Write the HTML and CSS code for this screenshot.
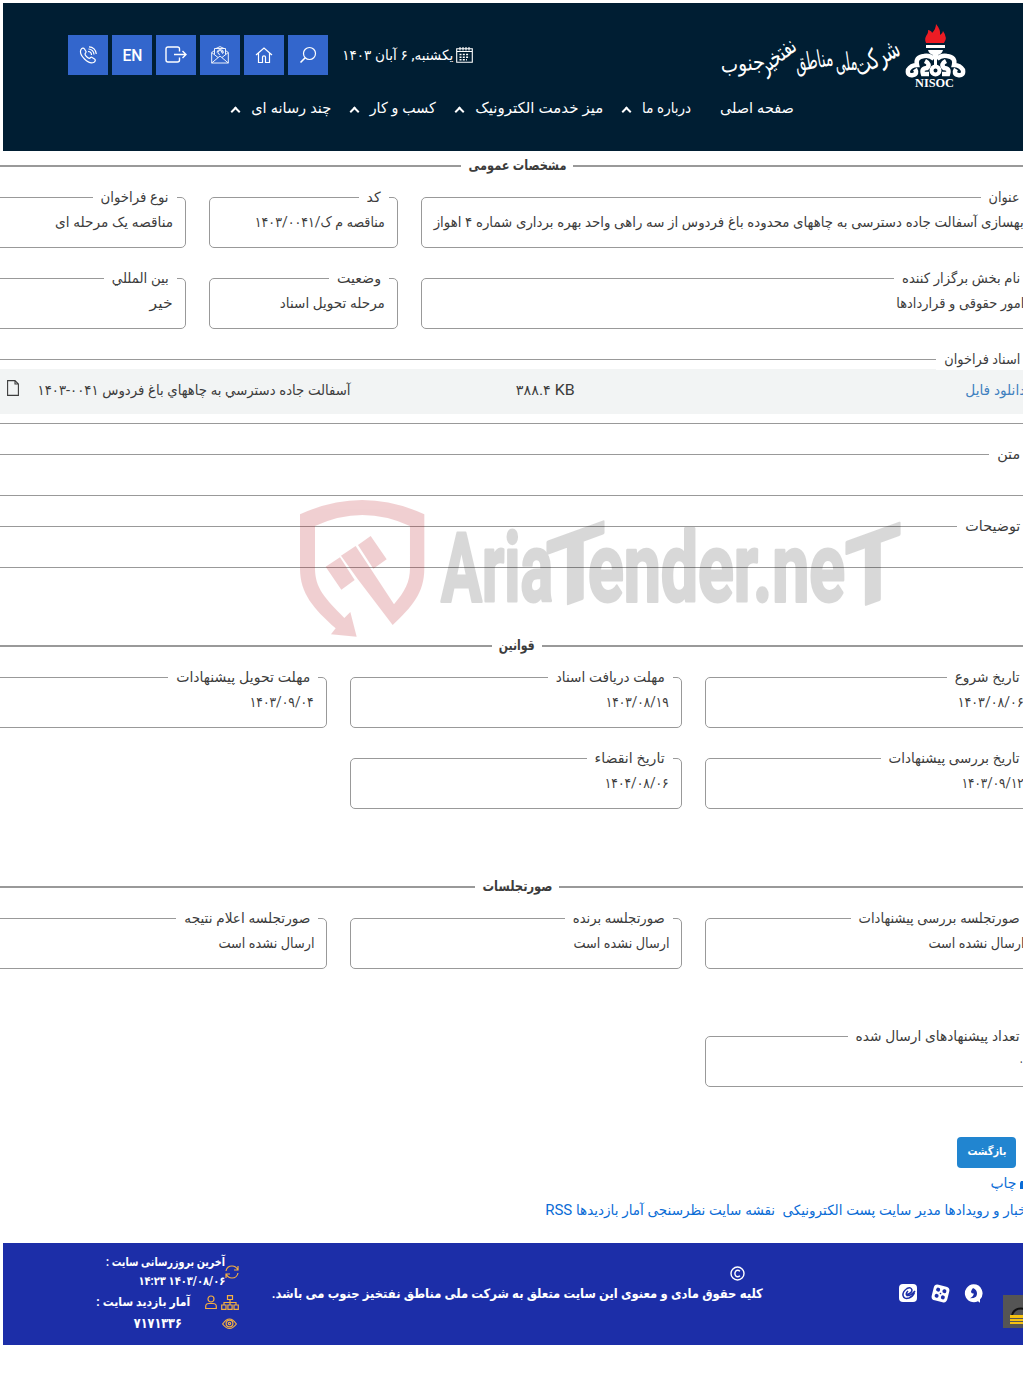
FILE: index.html
```html
<!DOCTYPE html>
<html lang="fa">
<head>
    <meta charset="UTF-8">
    <meta name="viewport" content="width=device-width, initial-scale=1.0">
    <title>شرکت ملی مناطق نفتخیز جنوب</title>
    <link rel="stylesheet" href="styles.css">
</head>
<body>

    <header class="header">
        <div class="top-bar">
            <div class="tools">
                <a class="tool"><svg width="18" height="18" viewBox="0 0 18 18"><path d="M2 3.500C3 2 4.500 1.500 5.500 3L7 5.500C7.500 6.500 6 7.300 6 8C6 9.500 9 12.500 10.500 12.300C11.300 12.200 11.700 10.700 12.700 11.300L15.500 13C17 14 16 15.500 15 16.300C12 18 8 15.500 5.500 13C2.500 10 .5 6.500 2 3.500ZM9 5.500C11 5.500 12.500 7 12.500 9M9.500 3C12.500 3 15 5.500 15 8.500M10 .8C14 .8 17 4 17.300 8"/></svg></a>
                <a class="tool"><span class="fit" data-w="20">EN</span></a>
                <a class="tool"><svg width="22" height="18" viewBox="0 0 22 18"><path d="M14.500 5.500V3Q14.500 1 12.500 1H3Q1 1 1 3V14Q1 16 3 16H12.500Q14.500 16 14.500 14V11.500M9 8.500H21M17.500 5L21 8.500L17.500 12" stroke-width="1.400"/></svg></a>
                <a class="tool"><svg width="18" height="18" viewBox="0 0 18 18"><path d="M3.500 4.500L.7 6.500V17H17.300V6.500L14.500 4.500M.7 6.500L7 11.500M17.300 6.500L11 11.500M.7 17L9 10L17.300 17M3.500 8.500V2.500H14.500V8.500M5 2.500L9 .6L13 2.500M11 6.500A2 2 0 1 0 9 8.500M11 4.500V7Q12 8 12.500 6.500Q12.500 3.500 9 3.500Q6 4 6 6.500" stroke-width=".9"/></svg></a>
                <a class="tool"><svg width="18" height="18" viewBox="0 0 18 18"><path d="M1 9L9 2L17 9M3.500 7V16.500H7.500V11Q7.500 9.800 9 9.800Q10.500 9.800 10.500 11V16.500H14.500V7"/></svg></a>
                <a class="tool"><svg width="18" height="18" viewBox="0 0 18 18"><circle cx="10.500" cy="7.500" r="6"/><path d="M6.200 11.700L1.500 16.500" stroke-width="1.600"/></svg></a>
            </div>
            <div class="date">
                <span class="fit" data-w="111" dir="rtl">یکشنبه, ۶ آبان ۱۴۰۳</span>
                <svg class="line-icon" width="17" height="16" viewBox="0 0 17 16"><path d="M.7 1.700H16.300V15.300H.7ZM.7 4.500H16.300M4 0V3.500M7 0V3.500M10 0V3.500M13 0V3.500"/><path d="M3.500 7.500H13.500M3.500 10.200H13.500M3.500 12.800H11" stroke-width="1.600" stroke-dasharray="2 1.300"/></svg>
            </div>
            <svg class="logo" width="246" height="70" viewBox="0 0 246 70">
                <g class="script" direction="rtl">
                    <text x="182" y="31" font-size="27" textLength="48" lengthAdjust="spacingAndGlyphs" transform="rotate(-28 182 31)">شرکت</text>
                    <text x="138" y="46" font-size="25" textLength="22" lengthAdjust="spacingAndGlyphs" transform="rotate(-8 138 46)">ملی</text>
                    <text x="114" y="42" font-size="24" textLength="38" lengthAdjust="spacingAndGlyphs" transform="rotate(-10 114 42)">مناطق</text>
                    <text x="78" y="26" font-size="23" textLength="42" lengthAdjust="spacingAndGlyphs" transform="rotate(-38 78 26)">نفتخیز</text>
                    <text x="45" y="46" font-size="22" textLength="44" lengthAdjust="spacingAndGlyphs" transform="rotate(-5 45 46)">جنوب</text>
                </g>
                <path fill="#ec1c24" d="M206 20C203 13 209 12 208 7Q212 8 212 10Q216 6 216 1Q221 7 220 12Q223 10 223 8Q228 15 224 20Z"/>
                <path fill="#fff" d="M206 22H225V25H206ZM208 27H223Q222 31 218 32V36H213V32Q209 31 208 27Z"/>
                <g fill="none" stroke="#fff" stroke-width="4.500">
                    <path d="M214 36Q210 32 204 33Q195 34 197 42Q191 42 188 47Q187 53 193 52Q198 51 195 46"/>
                    <path d="M217 36Q221 32 227 33Q236 34 234 42Q240 42 243 47Q244 53 238 52Q233 51 236 46"/>
                    <path d="M205 38Q211 41 207 45Q201 45 203 51H209M226 38Q220 41 224 45Q230 45 228 51H222"/>
                    <circle cx="215.500" cy="47.500" r="4" stroke-width="4"/>
                    <path d="M215.500 36V43" stroke-width="3"/>
                </g>
                <text class="logo-name" x="195" y="64" textLength="39" lengthAdjust="spacingAndGlyphs">NISOC</text>
            </svg>
        </div>
        <nav class="nav" dir="rtl">
            <a class="home"><span class="fit" data-w="74">صفحه اصلی</span></a>
            <a><span class="fit" data-w="49">درباره ما</span><i class="caret"></i></a>
            <a><span class="fit" data-w="128">میز خدمت الکترونیک</span><i class="caret"></i></a>
            <a><span class="fit" data-w="66">کسب و کار</span><i class="caret"></i></a>
            <a><span class="fit" data-w="80">چند رسانه ای</span><i class="caret"></i></a>
        </nav>
    </header>

    <main class="content" dir="rtl">
        <h2 class="section-title"><span class="fit" data-w="98">مشخصات عمومی</span></h2>
        <div class="general">
            <fieldset>
                <legend><span class="fit" data-w="31">عنوان</span></legend>
                <span class="fit" data-w="590">بهسازی آسفالت جاده دسترسی به چاههای محدوده باغ فردوس از سه راهی واحد بهره برداری شماره ۴ اهواز</span>
            </fieldset>
            <fieldset>
                <legend><span class="fit" data-w="14">کد</span></legend>
                <span class="fit" data-w="130">مناقصه م ک/۱۴۰۳/۰۰۴۱</span>
            </fieldset>
            <fieldset>
                <legend><span class="fit" data-w="68">نوع فراخوان</span></legend>
                <span class="fit" data-w="118">مناقصه یک مرحله ای</span>
            </fieldset>
            <fieldset>
                <legend><span class="fit" data-w="118">نام بخش برگزار کننده</span></legend>
                <span class="fit" data-w="128">امور حقوقی و قراردادها</span>
            </fieldset>
            <fieldset>
                <legend><span class="fit" data-w="44">وضعیت</span></legend>
                <span class="fit" data-w="105">مرحله تحویل اسناد</span>
            </fieldset>
            <fieldset>
                <legend><span class="fit" data-w="57">بين المللي</span></legend>
                <span class="fit" data-w="23">خیر</span>
            </fieldset>
        </div>

        <fieldset class="files">
            <legend><span class="fit" data-w="76">اسناد فراخوان</span></legend>
            <div class="file-row">
                <a class="download"><span class="fit" data-w="60">دانلود فایل</span></a>
                <span class="file-size"><span class="fit" data-w="59" dir="ltr">۳۸۸.۴ KB</span></span>
                <span class="file-name"><span class="fit" data-w="313">آسفالت جاده دسترسي به چاههاي باغ فردوس ۰۰۴۱-۱۴۰۳</span></span>
                <svg class="line-icon" width="12" height="16" viewBox="0 0 12 16"><path d="M.6 .6H8L11.400 4V15.400H.6ZM8 .6V4H11.400"/></svg>
            </div>
        </fieldset>
        <fieldset class="empty">
            <legend><span class="fit" data-w="23">متن</span></legend>
        </fieldset>
        <fieldset class="empty">
            <legend><span class="fit" data-w="55">توضیحات</span></legend>
        </fieldset>

        <h2 class="section-title spaced"><span class="fit" data-w="36">قوانین</span></h2>
        <div class="thirds">
            <fieldset>
                <legend><span class="fit" data-w="65">تاریخ شروع</span></legend>
                <span class="fit" data-w="66">۱۴۰۳/۰۸/۰۶</span>
            </fieldset>
            <fieldset>
                <legend><span class="fit" data-w="109">مهلت دریافت اسناد</span></legend>
                <span class="fit" data-w="63">۱۴۰۳/۰۸/۱۹</span>
            </fieldset>
            <fieldset>
                <legend><span class="fit" data-w="134">مهلت تحویل پیشنهادات</span></legend>
                <span class="fit" data-w="64">۱۴۰۳/۰۹/۰۴</span>
            </fieldset>
            <fieldset>
                <legend><span class="fit" data-w="131">تاریخ بررسی پیشنهادات</span></legend>
                <span class="fit" data-w="62">۱۴۰۳/۰۹/۱۲</span>
            </fieldset>
            <fieldset>
                <legend><span class="fit" data-w="70">تاریخ انقضاء</span></legend>
                <span class="fit" data-w="64">۱۴۰۴/۰۸/۰۶</span>
            </fieldset>
        </div>

        <h2 class="section-title spaced"><span class="fit" data-w="70">صورتجلسات</span></h2>
        <div class="thirds">
            <fieldset>
                <legend><span class="fit" data-w="161">صورتجلسه بررسی پیشنهادات</span></legend>
                <span class="fit" data-w="96">ارسال نشده است</span>
            </fieldset>
            <fieldset>
                <legend><span class="fit" data-w="92">صورتجلسه برنده</span></legend>
                <span class="fit" data-w="96">ارسال نشده است</span>
            </fieldset>
            <fieldset>
                <legend><span class="fit" data-w="126">صورتجلسه اعلام نتیجه</span></legend>
                <span class="fit" data-w="96">ارسال نشده است</span>
            </fieldset>
        </div>
        <div class="thirds offers">
            <fieldset>
                <legend><span class="fit" data-w="164">تعداد پیشنهادهای ارسال شده</span></legend>
                <span class="fit" data-w="5">۰</span>
            </fieldset>
        </div>

        <a class="back"><span class="fit" data-w="39">بازگشت</span></a>
        <div class="print">
            <svg width="14" height="16" viewBox="0 0 14 16"><path fill="currentColor" d="M3 0H11V5H13L14 7V13H11V16H3V13H0V7L1 5H3Z"/></svg>
            <span class="fit" data-w="26">چاپ</span>
        </div>
        <div class="links"><span class="fit" data-w="485">اخبار و رویدادها مدیر سایت پست الکترونیکی&nbsp; نقشه سایت نظرسنجی آمار بازدیدها RSS</span></div>
    </main>

    <footer class="footer">
        <div class="stats" dir="rtl">
            <div class="stat updated">
                <svg width="14" height="14" viewBox="0 0 14 14"><path d="M1 6Q2 1 7 1Q11 1 13 5M13 1V5H9M13 8Q12 13 7 13Q3 13 1 9M1 13V9H5"/></svg>
                <div>
                    <span class="fit" data-w="119">آخرین بروزرسانی سایت :</span>
                    <span class="fit" data-w="87">۱۴۰۳/۰۸/۰۶ ۱۴:۲۳</span>
                </div>
            </div>
            <div class="stat visits">
                <svg width="18" height="15" viewBox="0 0 18 15"><path d="M6.500 .7H11.500V4.500H6.500ZM9 4.500V10M3 10V7.500H15V10M.7 10H5V14.300H.7ZM6.900 10H11.100V14.300H6.900ZM13 10H17.300V14.300H13Z"/></svg>
                <svg width="12" height="15" viewBox="0 0 12 15"><circle cx="6" cy="4" r="3"/><path d="M.7 13.500V11.500Q.7 8.500 4 8.500H8Q11.300 8.500 11.300 11.500V13.500Z"/></svg>
                <span class="fit" data-w="94">آمار بازدید سایت :</span>
            </div>
            <div class="stat count">
                <svg width="15" height="12" viewBox="0 0 15 12"><path d="M.6 6Q7.500 -4 14.400 6Q7.500 15 .6 6Z"/><circle cx="7.500" cy="5.500" r="3.400"/><circle cx="7.500" cy="5.500" r="1.200"/></svg>
                <span class="fit" data-w="48">۷۱۷۱۳۳۶</span>
            </div>
        </div>
        <div class="copyright" dir="rtl">
            <svg width="15" height="15" viewBox="0 0 15 15"><circle cx="7.500" cy="7.500" r="6.500"/><path d="M10 5.300Q7.500 3.300 5.600 5.300Q4.200 7.500 5.600 9.700Q7.500 11.700 10 9.700"/></svg>
            <span class="fit" data-w="491">کلیه حقوق مادی و معنوی این سایت متعلق به شرکت ملی مناطق نفتخیز جنوب می باشد.</span>
        </div>
        <div class="social">
            <svg width="18" height="18" viewBox="0 0 18 18"><rect width="18" height="18" rx="4" fill="#fff"/><path d="M7 10.500Q13 9.500 13 6Q12 2.500 8 4.500Q3.500 7.500 4 11.500Q5 15.500 10 14Q14 12.500 15.500 8.500M9 7Q6 10 8 11.500Q12 12 16 7" fill="none" stroke="#1c2ea8" stroke-width="1.500"/></svg>
            <svg width="19" height="19" viewBox="0 0 19 19"><g transform="rotate(14 9.500 9.500)"><rect x="1.500" y="1.500" width="16" height="16" rx="4" fill="#fff"/><g fill="#1c2ea8"><circle cx="6.300" cy="6.300" r="2"/><circle cx="12.700" cy="6.300" r="2"/><circle cx="6.300" cy="12.700" r="2"/><circle cx="12.700" cy="12.700" r="2"/><circle cx="9.500" cy="9.500" r=".8"/></g></g></svg>
            <svg width="19" height="19" viewBox="0 0 19 19"><path fill="#fff" d="M9.500 .3A9 9 0 1 0 14 17.300L16 18.700V15.500A9 9 0 0 0 9.500 .3Z"/><path fill="#1c2ea8" d="M9 4Q13 5.500 13 9.500Q13 13 9.500 14L6 14.300Q9.500 12.500 9.800 9.500Q7 10 7 7.500Q7.500 5.500 9 4Z"/></svg>
        </div>
    </footer>

    <div class="lock">
        <svg width="33" height="33" viewBox="0 0 33 33"><path d="M9 20A9.500 9.500 0 0 1 27 20" fill="none" stroke="#111" stroke-width="2"/><path fill="#f5c211" d="M7 20H29V23H7ZM7 24H29V26H7ZM7 27H29V29H7Z"/></svg>
    </div>

    <svg class="watermark" width="620" height="160" viewBox="0 0 620 160">
        <g fill="#b8151f" opacity=".2" transform="scale(.3333)">
            <path d="M30 73Q217 -13 403 73V235C403 310 365 352 308 405L203 267L153 197L197 168L243 238L312 343C345 305 360 275 360 235V108Q217 42 75 108V235C75 295 105 325 163 384L181 366L200 440L123 433L137 415C70 355 30 310 30 235Z"/>
            <path d="M107 230L150 202L194 270L154 299ZM204 165L242 138L290 208L250 236Z"/>
        </g>
        <g class="watermark-text">
            <text x="151" y="111" textLength="112" lengthAdjust="spacingAndGlyphs">Aria</text>
            <text x="256" y="112" textLength="59" lengthAdjust="spacingAndGlyphs" transform="translate(0 103) skewY(-20)">T</text>
            <text x="298" y="111" textLength="257" lengthAdjust="spacingAndGlyphs">ender.ne</text>
            <text x="555" y="112" textLength="56" lengthAdjust="spacingAndGlyphs" transform="translate(0 212) skewY(-20)">T</text>
        </g>
    </svg>

    <script src="script.js"></script>
</body>
</html>
```
FILE: styles.css
```css
body {
    margin: 0;
    padding-top: 3px;
    position: relative;
    width: 1023px;
    height: 1381px;
    overflow: hidden;
    background-color: #fff;
    color: #3c3c3c;
    font-family: Roboto, "DejaVu Sans Condensed", "DejaVu Sans", sans-serif;
    font-size: 14px;
    line-height: 21px;
}
svg {
    flex-shrink: 0;
}
.fit {
    display: inline-block;
    white-space: nowrap;
    transform-origin: right center;
}
.line-icon {
    fill: none;
    stroke: currentColor;
    stroke-width: 1.1;
}

/* header */
.header {
    margin-left: 3px;
    height: 148px;
    background-color: #001e33;
    color: #fff;
}
.top-bar {
    display: flex;
    padding: 20px 0 0 65px;
    height: 70px;
}
.tools {
    display: flex;
    gap: 4px;
    padding-top: 12px;
}
.tool {
    width: 40px;
    height: 40px;
    display: flex;
    align-items: center;
    justify-content: center;
    background-color: #3366cc;
    font-size: 16px;
    font-weight: 500;
}
.tool svg {
    fill: none;
    stroke: #fff;
    stroke-width: 1.2;
}
.date {
    display: flex;
    align-items: center;
    gap: 3px;
    height: 40px;
    margin: 12px 0 0 14px;
    width: 132px;
}
.logo {
    margin-left: 246px;
    overflow: visible;
}
.script {
    fill: #fff;
    font-family: "DejaVu Sans Condensed", "DejaVu Sans", sans-serif;
}
.logo-name {
    fill: #fff;
    font: bold 13px "Liberation Serif", serif;
}
.nav {
    display: flex;
    gap: 19px;
    width: 791px;
    padding-top: 5px;
    font-size: 15px;
}
.nav a {
    display: flex;
    align-items: center;
    gap: 10px;
}
.nav .home {
    margin-left: 10px;
}
.caret {
    width: 7px;
    height: 7px;
    margin: 5px 2px 0 1px;
    border: solid #fff;
    border-width: 2px 0 0 2px;
    box-sizing: border-box;
    transform: rotate(45deg);
}

/* tender details */
.content {
    width: 1042px;
    margin-left: -5px;
}
.section-title {
    display: flex;
    align-items: center;
    gap: 7px;
    height: 21px;
    margin: 4px 0 11px;
    padding-left: 2px;
    font-size: 14px;
    font-weight: bold;
}
.section-title::before,
.section-title::after {
    content: "";
    flex: 1;
    height: 2px;
    background-color: #999;
}
.section-title.spaced {
    margin-top: 67px;
}
.general,
.thirds {
    display: grid;
    grid-template-columns: 616px 189px 191px;
    gap: 20px 23px;
}
.thirds {
    grid-template-columns: repeat(3, 332px);
}
fieldset {
    box-sizing: border-box;
    height: 61px;
    margin: 0;
    padding: 0 8px;
    min-width: 0;
    border: 1px solid #999;
    border-radius: 5px;
}
fieldset > .fit {
    margin-right: 4px;
    margin-top: 4px;
}
legend {
    height: 21px;
    padding: 0 8px;
    background-color: #fff;
}
.files {
    height: 75px;
    margin-top: 20px;
}
.file-row {
    display: flex;
    align-items: center;
    height: 45px;
    margin: -1px 0 0 -8px;
    padding-right: 3px;
    background-color: #f2f4f4;
}
.files legend {
    position: relative;
    z-index: 1;
}
.download {
    width: 450px;
    color: #4080bf;
}
.file-size {
    width: 224px;
}
.file-name {
    width: 332px;
}
.file-row > a,
.file-row > span {
    padding-bottom: 2px;
}
.file-row .line-icon {
    margin-bottom: 8px;
}
.empty {
    height: 52px;
    margin-top: 20px;
}
.offers {
    margin-top: 57px;
}
.back {
    display: block;
    width: 59px;
    height: 31px;
    margin: 50px 21px 0 0;
    border-radius: 4px;
    background-color: #2185d0;
    color: #fff;
    font-size: 11px;
    font-weight: bold;
    line-height: 29px;
    text-align: center;
}
.print,
.links {
    color: #0a6cd6;
    padding-right: 7px;
    height: 27px;
    line-height: 27px;
}
.print {
    display: flex;
    align-items: center;
    gap: 4px;
    padding-right: 3px;
    margin-top: 2px;
}

/* footer */
.footer {
    display: flex;
    height: 102px;
    margin: 19px 0 0 3px;
    background-color: #1c2ea8;
    color: #fff;
    font-size: 12px;
    font-weight: bold;
}
.stats {
    width: 236px;
    padding-top: 10px;
}
.stat {
    display: flex;
    align-items: center;
}
.stat svg {
    fill: none;
    stroke: #f5b041;
    stroke-width: 1.2;
}
.updated div {
    display: flex;
    flex-direction: column;
    align-items: flex-start;
    line-height: 19px;
}
.visits {
    gap: 4px;
    height: 22px;
}
.visits .fit {
    margin-right: 11px;
}
.count {
    gap: 40px;
    padding-right: 2px;
    font-size: 14px;
}
.copyright {
    display: flex;
    flex-direction: column;
    align-items: flex-start;
    width: 524px;
    padding-top: 23px;
    font-size: 13px;
}
.copyright svg {
    margin-right: 18px;
    margin-bottom: 2px;
    fill: none;
    stroke: #fff;
    stroke-width: 1.4;
}
.social {
    display: flex;
    gap: 14px;
    padding: 41px 0 0 136px;
}
.lock {
    position: absolute;
    left: 1003px;
    top: 1295px;
    width: 20px;
    height: 33px;
    overflow: hidden;
    background-color: #555;
}

.watermark {
    position: absolute;
    left: 290px;
    top: 490px;
}
.watermark-text {
    opacity: .15;
    stroke: #000;
    stroke-width: 3;
    stroke-linejoin: round;
    font: bold 97px Roboto, sans-serif;
}
```
FILE: script.js
```javascript
document.querySelectorAll('.fit').forEach(el => {
    const width = parseFloat(el.dataset.w);
    const natural = el.getBoundingClientRect().width;
    el.style.transform = `scaleX(${width / natural})`;
    el.style.marginLeft = `${width - natural}px`;
});
```
